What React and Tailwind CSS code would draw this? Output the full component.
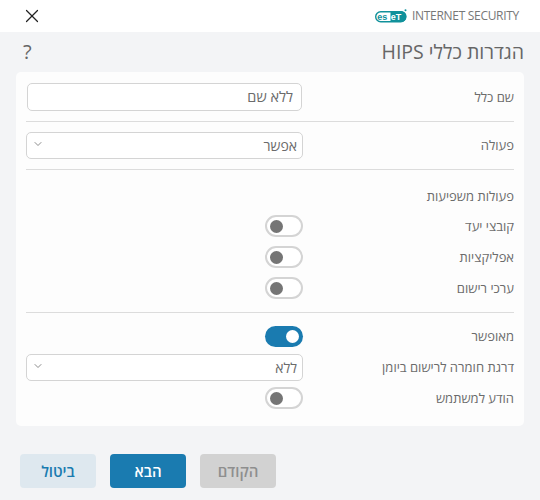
import { ChevronDown, X } from 'lucide-react';

function Toggle({ on }) {
  return on ? (
    <div dir="ltr" className="w-[38px] h-[21px] rounded-full bg-[#1a7bb0] flex items-center justify-end pr-[4px]">
      <div className="w-[13px] h-[13px] rounded-full bg-white" />
    </div>
  ) : (
    <div dir="ltr" className="w-[38px] h-[22px] rounded-full border-2 border-[#d4d4d4] bg-white flex items-center pl-[3px]">
      <div className="w-[13px] h-[13px] rounded-full bg-[#757575]" />
    </div>
  );
}

function Row({ label, h, children }) {
  return (
    <div className={`flex items-center ${h}`}>
      <div className="w-[211px] text-[13px] text-[#6b6b6b] leading-none">{label}</div>
      <div className="w-[277px] flex justify-start">{children}</div>
    </div>
  );
}

function Select({ value }) {
  return (
    <div className="w-[277px] h-[27px] rounded-[5px] border border-[#d4d4d4] bg-white flex items-center justify-between pr-[5px] pl-[5px]">
      <span className="text-[14px] text-[#6b6b6b] leading-none">{value}</span>
      <ChevronDown size={12} strokeWidth={1.5} className="text-[#666] -mt-[3px]" />
    </div>
  );
}

function Divider() {
  return <div className="h-px bg-[#dcdcdc]" />;
}

export default function App() {
  return (
    <div dir="rtl" className="w-[540px] h-[500px] bg-[#f3f4f6] flex flex-col font-['Open_Sans','Noto_Sans',sans-serif]">
      {/* Header */}
      <div className="h-[32px] bg-white flex items-center justify-between pr-[21px] pl-[21px]">
        <div dir="ltr" className="flex items-center gap-[5px]">
          <svg width="32" height="14" viewBox="0 0 32 14">
            <rect x="0.7" y="2.7" width="30" height="10" rx="5" fill="#fff" stroke="#10919b" strokeWidth="1.4" />
            <path d="M15.5 2h10.5a5.5 5.5 0 0 1 0 11H15.5z" fill="#10919b" />
            <text x="2.2" y="10.9" fontSize="9" fontWeight="800" fill="#10919b" fontFamily="Liberation Sans, sans-serif">es</text>
            <text x="15.8" y="10.9" fontSize="9" fontWeight="800" fill="#fff" fontFamily="Liberation Sans, sans-serif">eT</text>
            <circle cx="30.5" cy="1.2" r="1" fill="#10919b" />
          </svg>
          <span className="text-[12px] text-[#777] tracking-[-0.3px] leading-none">INTERNET SECURITY</span>
        </div>
        <X size={22} strokeWidth={1.3} className="text-[#222]" />
      </div>

      {/* Title */}
      <div className="h-[40px] flex items-center justify-between pr-[16px] pl-[23px]">
        <h1 className="text-[19.5px] font-medium text-[#666] leading-none">הגדרות כללי HIPS</h1>
        <span className="text-[20px] text-[#666] leading-none">?</span>
      </div>

      {/* Panel */}
      <div className="mx-[16px] h-[354px] bg-[#fdfdfd] rounded-[5px] px-[10px] pt-[11px] flex flex-col">
        <div className="flex items-center h-[28px]">
          <div className="w-[212px] text-[13px] text-[#6b6b6b] leading-none">שם כלל</div>
          <div className="w-[275px] h-[28px] rounded-[5px] border border-[#d4d4d4] bg-white flex items-center pr-[8px]">
            <span className="text-[14.5px] text-[#6b6b6b] leading-none">ללא שם</span>
          </div>
        </div>
        <div className="mt-[10px]"><Divider /></div>
        <div className="mt-[10px]">
          <Row label="פעולה" h="h-[27px]"><Select value="אפשר" /></Row>
        </div>
        <div className="mt-[10px]"><Divider /></div>
        <div className="mt-[16px] h-[20px] flex items-center text-[13px] text-[#6b6b6b] leading-none">פעולות משפיעות</div>
        <div className="mt-[9px] flex flex-col gap-[9px]">
          <Row label="קובצי יעד" h="h-[22px]"><Toggle /></Row>
          <Row label="אפליקציות" h="h-[22px]"><Toggle /></Row>
          <Row label="ערכי רישום" h="h-[22px]"><Toggle /></Row>
        </div>
        <div className="mt-[13px]"><Divider /></div>
        <div className="mt-[13px]">
          <Row label="מאופשר" h="h-[21px]"><Toggle on /></Row>
        </div>
        <div className="mt-[7px]">
          <Row label="דרגת חומרה לרישום ביומן" h="h-[27px]"><Select value="ללא" /></Row>
        </div>
        <div className="mt-[6px]">
          <Row label="הודע למשתמש" h="h-[22px]"><Toggle /></Row>
        </div>
      </div>

      {/* Buttons */}
      <div className="mt-[28px] flex justify-end gap-[14px] pl-[20px]">
        <button className="w-[76px] h-[34px] rounded-[4px] bg-[#d2d2d2] text-[15px] font-semibold text-[#8e8e8e]">הקודם</button>
        <button className="w-[76px] h-[34px] rounded-[4px] bg-[#1a7bb0] text-[15px] font-semibold text-white">הבא</button>
        <button className="w-[76px] h-[34px] rounded-[4px] bg-[#dee8ef] text-[15px] font-semibold text-[#1a7bb0]">ביטול</button>
      </div>
    </div>
  );
}
